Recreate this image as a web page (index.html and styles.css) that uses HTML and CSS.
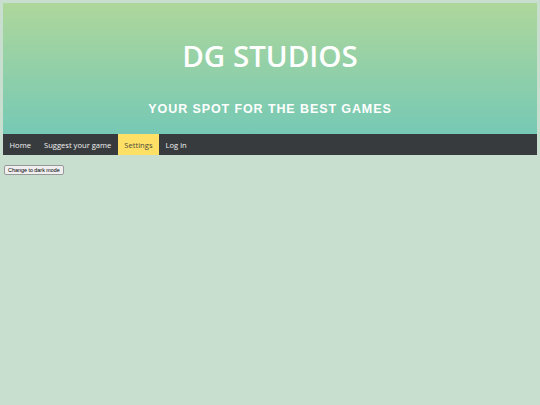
FILE: index.html
```html
<!DOCTYPE html>
<html>
<head>
<meta charset="utf-8">
<link rel="stylesheet" href="styles.css">
</head>
<body>
<header class="hero">
  <h1 class="title">DG STUDIOS</h1>
  <p class="tagline">YOUR SPOT FOR THE BEST GAMES</p>
</header>
<nav class="nav">
  <a class="nav-item">Home</a>
  <a class="nav-item">Suggest your game</a>
  <a class="nav-item active">Settings</a>
  <a class="nav-item">Log in</a>
</nav>
<button class="mode-btn">Change to dark mode</button>
</body>
</html>
```
FILE: styles.css
```css
html, body { margin: 0; padding: 0; }
body {
  background: #c8dfd0;
  padding: 3px;
  font-family: "Open Sans", sans-serif;
}
.hero {
  height: 131px;
  background: linear-gradient(to bottom, #aed79b, #76c9b5);
  display: flex;
  flex-direction: column;
  align-items: center;
  box-sizing: border-box;
  padding-top: 33px;
}
.title {
  margin: 0;
  color: #fff;
  font-family: "Open Sans", sans-serif;
  font-weight: 600;
  font-size: 29.5px;
  line-height: 40px;
}
.tagline {
  margin: 26px 0 0;
  color: #fff;
  font-family: "Liberation Sans", Arial, sans-serif;
  font-weight: bold;
  font-size: 12.5px;
  letter-spacing: 0.9px;
  line-height: 14px;
}
.nav {
  display: flex;
  background: #373b3e;
  height: 21px;
}
.nav-item {
  color: #f2f2f2;
  font-size: 7.6px;
  padding: 0 6.5px;
  display: flex;
  align-items: center;
}
.nav-item.active {
  background: #ffe066;
  color: #4a4a3a;
}
.mode-btn {
  margin: 6px 0 0 1px;
  font-family: "Liberation Sans", Arial, sans-serif;
  font-size: 5.4px;
  padding: 1px 3px;
  background: #efefef;
  border: 1px solid #999;
  border-radius: 2px;
  color: #000;
}
```
